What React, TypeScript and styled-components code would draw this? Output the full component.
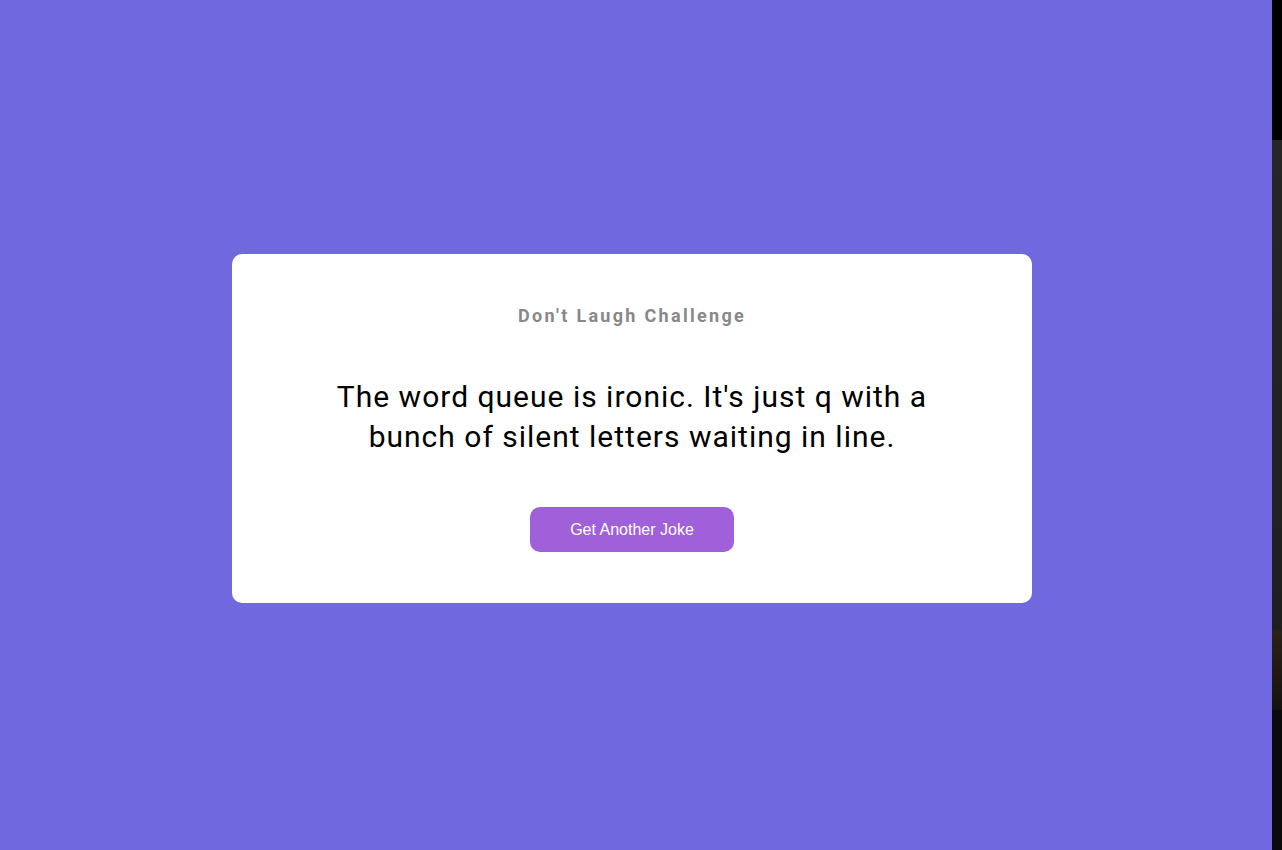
import styled, { createGlobalStyle } from "styled-components";

const GlobalStyle = createGlobalStyle`
    html, body {
        margin: 0;
        padding: 0;
    }

    body {
        font-family: "Roboto", "Liberation Sans", sans-serif;
    }
`;

const Page = styled.div`
    display: flex;
    width: 1282px;
    height: 850px;
    overflow: hidden;
`;

const Main = styled.main`
    flex: 1;
    display: flex;
    align-items: center;
    justify-content: center;
    padding: 7px 8px 0 0;
    background: #6f68df;
`;

const Strip = styled.div`
    width: 10px;
    background: linear-gradient(
        to bottom,
        #000 0,
        #000 140px,
        #262624 140px,
        #1f1f1e 630px,
        #2a2218 630px,
        #16120e 710px,
        #0a0a0a 710px,
        #0a0a0a 100%
    );
`;

const Card = styled.section`
    box-sizing: border-box;
    width: 800px;
    padding: 51px 50px 51px;
    background: #fff;
    border-radius: 10px;
    text-align: center;
`;

const Title = styled.h3`
    margin: 0;
    font-size: 18px;
    font-weight: 700;
    letter-spacing: 2.3px;
    color: #888;
`;

const Joke = styled.p`
    max-width: 620px;
    margin: 51px auto 50px;
    font-size: 30px;
    line-height: 40px;
    letter-spacing: 1px;
    color: #000;
`;

const Button = styled.button`
    width: 204px;
    height: 45px;
    border: none;
    border-radius: 10px;
    background: #9f60da;
    color: #fff;
    font-family: "Liberation Sans", Arial, sans-serif;
    font-size: 16px;
    cursor: pointer;
`;

const App = () => {
    return (
        <Page>
            <GlobalStyle />
            <Main>
                <Card>
                    <Title>Don't Laugh Challenge</Title>
                    <Joke>
                        The word queue is ironic. It's just q with a bunch of
                        silent letters waiting in line.
                    </Joke>
                    <Button>Get Another Joke</Button>
                </Card>
            </Main>
            <Strip />
        </Page>
    );
};

export default App;
